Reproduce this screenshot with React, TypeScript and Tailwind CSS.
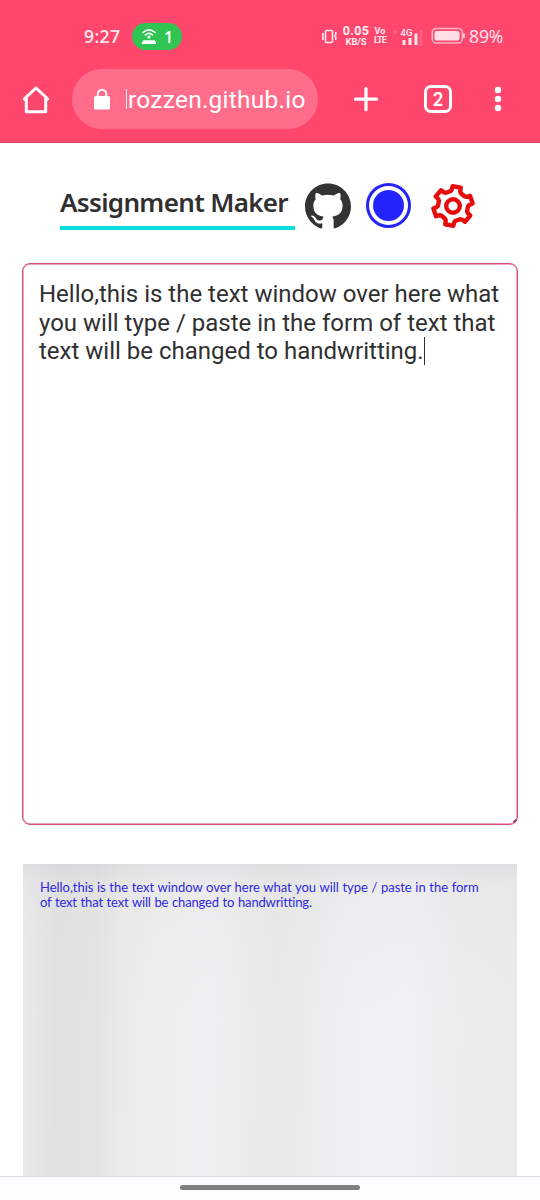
import React from "react";
import { SiGithub } from "react-icons/si";

function gearPath() {
  const pts: [number, number][] = [];
  for (let i = 0; i < 6; i++) {
    const base = 11 + i * 60;
    const ring: [number, number][] = [[-21, 15], [-15.5, 16.3], [-12, 19.8], [12, 19.8], [15.5, 16.3], [21, 15]];
    for (const [offset, radius] of ring) {
      const a = ((base + offset) * Math.PI) / 180;
      pts.push([24 + radius * Math.sin(a), 24 - radius * Math.cos(a)]);
    }
  }
  return "M" + pts.map((p) => p[0].toFixed(2) + " " + p[1].toFixed(2)).join("L") + "Z";
}

function StatusBar() {
  return (
    <div className="flex h-[69px] pt-[3px] text-[#ffeaf0]">
      <div className="ml-[84px] flex h-[66px] w-[48px] items-center font-['Open_Sans',sans-serif] text-[17.5px] font-semibold tracking-[0.4px]">9:27</div>
      <div className="mt-5 flex h-[27px] w-[50px] items-center rounded-full bg-[#30c553] text-white">
        <svg className="ml-[8px]" width="18" height="18" viewBox="0 0 18 18" fill="none" stroke="currentColor" strokeWidth="1.6" strokeLinecap="round">
          <path d="M3 4.5Q9-.8 15 4.5M5.3 7Q9 3.8 12.7 7" />
          <circle cx="9" cy="9" r="1.6" fill="currentColor" stroke="none" />
          <path d="M4.5 12.3h9q2.6 0 2.6 3.7H1.9q0-3.7 2.6-3.7Z" fill="currentColor" stroke="none" />
        </svg>
        <span className="ml-[6px] font-['Open_Sans',sans-serif] text-[16px] font-semibold">1</span>
      </div>
      <svg className="mt-[25px] ml-[139px]" width="17" height="17" viewBox="0 0 17 17" fill="none" stroke="currentColor" strokeWidth="1.6">
        <rect x="4.5" y="2.5" width="7" height="12" rx="1" />
        <path d="M1.8 5v7M14.8 4v3l-1 1 1 1v3" />
      </svg>
      <div className="mt-[22px] ml-[3px] flex w-[30px] flex-col items-center font-['Roboto',sans-serif] font-bold whitespace-nowrap">
        <span className="text-[12.5px] leading-[12px] tracking-[0.3px]">0.05</span>
        <span className="text-[9.5px] leading-[10px] tracking-[-0.1px]">KB/S</span>
      </div>
      <div className="mt-[24px] ml-[3px] flex w-[12px] flex-col items-center font-['Roboto',sans-serif] text-[9px] leading-[9px] font-bold">
        <span>Vo</span>
        <span className="tracking-[-0.9px]">LTE</span>
      </div>
      <svg className="ml-[6px] mt-[22px]" width="36" height="23" viewBox="0 0 36 23">
        <path d="M1 7h4M29 5v16" fill="none" stroke="#ff6583" strokeWidth="2.5" />
        <path d="M10.500 15h3v5h-3ZM16.500 13h3v7h-3ZM22.500 8.500h3v11.500h-3Z" fill="currentColor" />
        <text x="8.500" y="11" fontFamily="Roboto" fontWeight="500" fontSize="9.500" fill="currentColor">4G</text>
      </svg>
      <svg className="ml-[3px] mt-[24px]" width="36" height="18" viewBox="0 0 36 18">
        <rect x="1.300" y="1.500" width="30" height="14.500" rx="4" fill="none" stroke="#ffb4c4" strokeWidth="1.600" />
        <rect x="3.500" y="4" width="25" height="9.500" rx="2" fill="#ffdfe7" />
        <path d="M33 6.500v4.500" stroke="#ffdfe7" strokeWidth="1.700" />
      </svg>
      <div className="ml-[2px] flex h-[66px] items-center font-['Open_Sans',sans-serif] text-[17.5px] tracking-[-0.1px]">89%</div>
    </div>
  );
}

function AddressBar() {
  return (
    <div className="flex h-[60px] items-center text-white">
      <svg className="ml-[21px] shrink-0" width="30" height="32" viewBox="0 0 30 32" fill="none" stroke="currentColor" strokeWidth="3" strokeLinejoin="round" strokeLinecap="round">
        <path d="M3.300 16 15 5 26.700 16H24.700V28.700H5.300V16Z" />
      </svg>
      <div className="ml-[21px] flex h-[60px] w-[246px] shrink-0 items-center rounded-full bg-[#ff6d8a]">
        <svg className="ml-[21px]" width="18" height="24" viewBox="0 0 18 24">
          <path d="M4.800 10V7a4.200 4.200 0 0 1 8.400 0V10" fill="none" stroke="#fff" strokeWidth="2" />
          <rect x="1" y="9" width="16" height="13.500" rx="1.500" fill="#fff" />
        </svg>
        <span className="ml-[15px] h-[20px] w-px bg-white/90" />
        <span className="ml-px pt-[3px] font-['Roboto',sans-serif] text-[24.5px] tracking-[0.24px] whitespace-nowrap">rozzen.github.io</span>
      </div>
      <svg className="ml-[34px]" width="28" height="28" viewBox="0 0 28 28" stroke="currentColor" strokeWidth="3.200" strokeLinecap="round"><path d="M14 3.700v21M3.500 14.200h21" /></svg>
      <div className="ml-[44px] flex size-[28px] items-center justify-center rounded-[7px] border-3 border-white font-['Lato',sans-serif] text-[18px] leading-none font-bold">2</div>
      <svg className="ml-[42px]" width="8" height="28" viewBox="0 0 8 28" fill="currentColor"><circle cx="4" cy="5" r="3.200" /><circle cx="4" cy="14" r="3.200" /><circle cx="4" cy="23" r="3.200" /></svg>
    </div>
  );
}

export default function App() {
  return (
    <div className="flex h-[1200px] w-[540px] flex-col overflow-hidden bg-white">
      <header className="h-[143px] shrink-0 border-b border-[#d14b67] bg-[#ff476d]">
        <StatusBar />
        <AddressBar />
      </header>
      <main className="flex min-h-0 flex-1 flex-col px-[22px]">
        <div className="flex h-[120px] shrink-0 items-start pl-[38px]">
          <h1 className="mt-[40px] h-[47px] w-[235px] border-b-4 border-[#0ddddd] font-['Noto_Sans',sans-serif] text-[26px] leading-[38px] font-semibold tracking-[-0.66px] whitespace-nowrap text-[#303030]">Assignment Maker</h1>
          <SiGithub className="mt-[40px] ml-[10px] size-[46px] text-[#333]" />
          <div className="mt-[40px] ml-[15px] flex size-[45px] items-center justify-center rounded-full border-3 border-[#2424f5]">
            <span className="size-[31px] rounded-full bg-[#2424ff]" />
          </div>
          <svg className="mt-[39px] ml-[18px]" width="48" height="48" viewBox="0 0 48 48" fill="none" stroke="#e60c0c" strokeWidth="4.400" strokeLinejoin="round">
            <path d={gearPath()} />
            <circle cx="24" cy="24" r="6.800" />
          </svg>
        </div>
        <div className="relative h-[562px] w-[496px] shrink-0 rounded-[8px] border border-[#dc5475] pt-[16px] pl-[16px] font-['Roboto',sans-serif] text-[24px] leading-[28.5px] text-[#303030] shadow-[inset_0_0_0_0.5px_#dc5475]">
          <p className="whitespace-nowrap">Hello,this is the text window over here what</p>
          <p className="whitespace-nowrap">you will type / paste in the form of text that</p>
          <p className="flex items-center whitespace-nowrap">text will be changed to handwritting.<span className="h-[28px] w-[1.5px] bg-[#303030]" /></p>
          <span className="absolute right-[1px] bottom-[1px] h-[4px] w-[2px] rotate-45 bg-[#803549]" />
        </div>
        <div className="mt-[39px] ml-px min-h-0 w-[494px] flex-1 bg-[linear-gradient(180deg,rgba(205,207,209,.4)_0px,rgba(220,221,222,.25)_20px,rgba(225,225,226,.12)_80px,transparent_150px),linear-gradient(91deg,#ebebec_0%,#e1e1e2_7%,#e3e3e4_15%,#eaeaea_20%,#eeeeef_27%,#f0f0f2_38%,#e8e8e8_51%,#ebebec_57%,#f0f0f3_66%,#f1f1f4_78%,#ececed_88%,#ebebec_100%)] pt-[16px] pl-[17px] font-['Lato',sans-serif] text-[13px] leading-[15px] text-[#3027e0]">
          <p className="tracking-[-0.04px] whitespace-nowrap [word-spacing:0.4px]">Hello,this is the text window over here what you will type / paste in the form</p>
          <p className="tracking-[-0.15px] whitespace-nowrap [word-spacing:0.5px]">of text that text will be changed to handwritting.</p>
        </div>
      </main>
      <footer className="flex h-[24px] shrink-0 justify-center border-t border-[#dedee6] bg-[#fdfcff] pt-[8px]">
        <div className="h-[5px] w-[180px] rounded-full bg-[#818081]" />
      </footer>
    </div>
  );
}
